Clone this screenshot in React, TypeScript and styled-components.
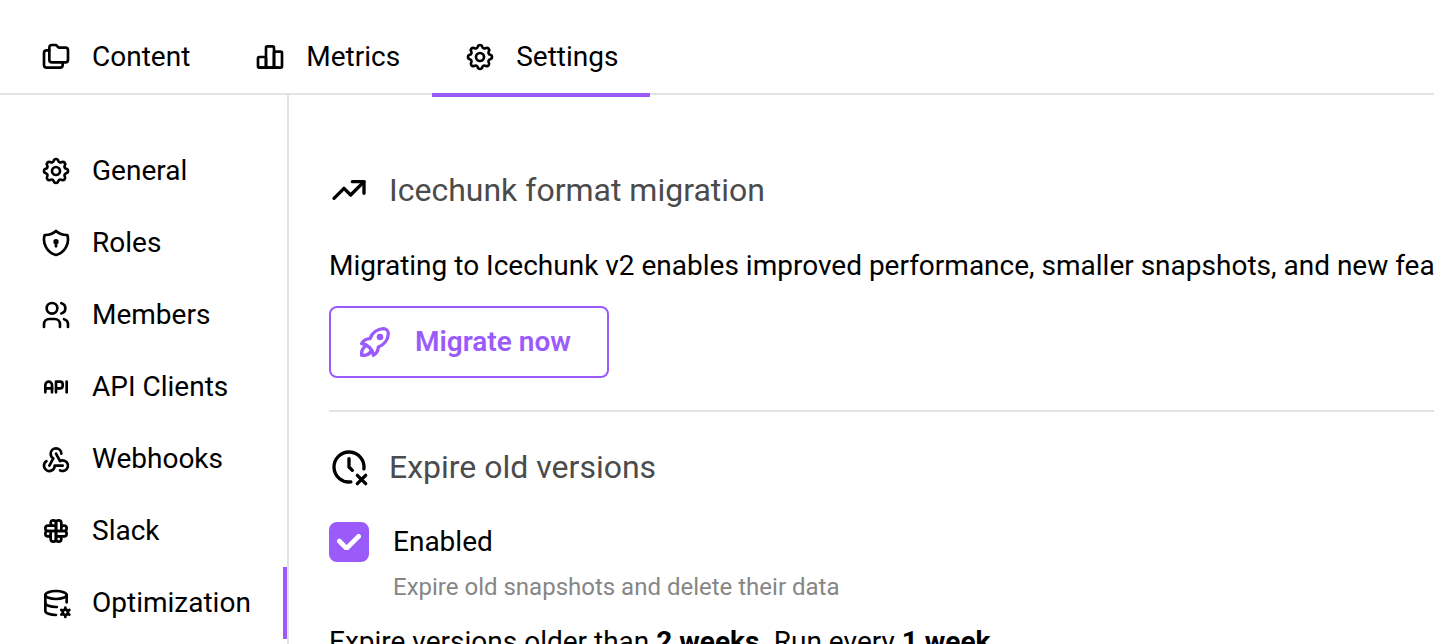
import React from "react";
import styled, { createGlobalStyle } from "styled-components";

const purple = "#9b5bfb";
const line = "#e3e3e3";

const GlobalStyle = createGlobalStyle`
  *, *::before, *::after { box-sizing: border-box; }
  body {
    margin: 0;
    background: #fff;
    color: #000;
    font-family: Roboto, "Liberation Sans", sans-serif;
    font-size: 28px;
    line-height: 42px;
  }
`;

const Page = styled.div`
  display: flex;
  flex-direction: column;
  height: 100vh;
  overflow: hidden;
`;

const TabBar = styled.nav`
  display: flex;
  flex: none;
  padding: 21px 8px 0;
  border-bottom: 2px solid ${line};
`;

const Tab = styled.a<{ $active?: boolean }>`
  display: flex;
  align-items: center;
  gap: 20px;
  height: 76px;
  margin-bottom: -4px;
  padding: 0 32px;
  border-bottom: 4px solid ${(p) => (p.$active ? purple : "transparent")};
  color: inherit;
  text-decoration: none;
`;

const Body = styled.div`
  display: flex;
  flex: 1;
  min-height: 0;
`;

const Sidebar = styled.nav`
  flex: none;
  width: 289px;
  padding-top: 40px;
  border-right: 2px solid ${line};
`;

const SideLink = styled.a<{ $active?: boolean }>`
  display: flex;
  align-items: center;
  gap: 20px;
  height: 72px;
  padding-left: 40px;
  border-right: 4px solid ${(p) => (p.$active ? purple : "transparent")};
  color: inherit;
  text-decoration: none;
`;

const Main = styled.main`
  flex: 1;
  min-width: 0;
  padding: 75px 0 0 40px;
  overflow: hidden;
`;

const Section = styled.section`
  & + & {
    margin-top: 32px;
    padding-top: 35px;
    border-top: 2px solid ${line};
  }
`;

const Heading = styled.h2`
  display: flex;
  align-items: center;
  gap: 20px;
  margin: 0 0 35px;
  color: #4b4b4b;
  font-size: 32px;
  font-weight: 400;
  line-height: 40px;

  svg { color: #000; }
`;

const Text = styled.p`
  margin: 0;
  white-space: nowrap;
`;

const Button = styled.button`
  display: flex;
  align-items: center;
  gap: 20px;
  height: 72px;
  margin-top: 19px;
  padding: 0 36px 0 24px;
  border: 2px solid ${purple};
  border-radius: 8px;
  background: #fff;
  color: ${purple};
  font: inherit;
  font-weight: 600;
`;

const Option = styled.div`
  display: grid;
  grid-template-columns: 40px 1fr;
  column-gap: 24px;
  margin-bottom: 16px;
`;

const CheckBox = styled.input`
  grid-area: 1 / 1;
  appearance: none;
  width: 40px;
  height: 40px;
  margin: 0;
  border: 2px solid #ced4da;
  border-radius: 8px;

  &:checked {
    border-color: ${purple};
    background: ${purple};
  }
  &:not(:checked) + svg { visibility: hidden; }
`;

const Tick = styled.svg`
  grid-area: 1 / 1;
  place-self: center;
  width: 24px;
  color: #fff;
  pointer-events: none;
`;

const Label = styled.label`
  grid-area: 1 / 2;
  line-height: 40px;
`;

const Hint = styled.p`
  grid-area: 2 / 2;
  margin: 7px 0 0;
  color: #868686;
  font-size: 24px;
  line-height: 36px;
`;

const Svg = styled.svg`
  flex: none;
`;

const icons = {
  folders: [
    "M9 3h3l2 2h5a2 2 0 0 1 2 2v7a2 2 0 0 1 -2 2h-10a2 2 0 0 1 -2 -2v-9a2 2 0 0 1 2 -2",
    "M17 16v2a2 2 0 0 1 -2 2h-10a2 2 0 0 1 -2 -2v-9a2 2 0 0 1 2 -2h2",
  ],
  chart: [
    "M3 13a1 1 0 0 1 1 -1h4a1 1 0 0 1 1 1v6a1 1 0 0 1 -1 1h-4a1 1 0 0 1 -1 -1z",
    "M15 9a1 1 0 0 1 1 -1h4a1 1 0 0 1 1 1v10a1 1 0 0 1 -1 1h-4a1 1 0 0 1 -1 -1z",
    "M9 5a1 1 0 0 1 1 -1h4a1 1 0 0 1 1 1v14a1 1 0 0 1 -1 1h-4a1 1 0 0 1 -1 -1z",
    "M4 20h14",
  ],
  settings: [
    "M10.325 4.317c.426 -1.756 2.924 -1.756 3.35 0a1.724 1.724 0 0 0 2.573 1.066c1.543 -.94 3.31 .826 2.37 2.37a1.724 1.724 0 0 0 1.065 2.572c1.756 .426 1.756 2.924 0 3.35a1.724 1.724 0 0 0 -1.066 2.573c.94 1.543 -.826 3.31 -2.37 2.37a1.724 1.724 0 0 0 -2.572 1.065c-.426 1.756 -2.924 1.756 -3.35 0a1.724 1.724 0 0 0 -2.573 -1.066c-1.543 .94 -3.31 -.826 -2.37 -2.37a1.724 1.724 0 0 0 -1.065 -2.572c-1.756 -.426 -1.756 -2.924 0 -3.35a1.724 1.724 0 0 0 1.066 -2.573c-.94 -1.543 .826 -3.31 2.37 -2.37c1 .608 2.296 .07 2.572 -1.065z",
    "M9 12a3 3 0 1 0 6 0a3 3 0 0 0 -6 0",
  ],
  shield: [
    "M12 3a12 12 0 0 0 8.5 3a12 12 0 0 1 -8.5 15a12 12 0 0 1 -8.5 -15a12 12 0 0 0 8.5 -3",
    "M11 11a1 1 0 1 0 2 0a1 1 0 1 0 -2 0",
    "M12 12l0 2.5",
  ],
  users: [
    "M5 7a4 4 0 1 0 8 0a4 4 0 1 0 -8 0",
    "M3 21v-2a4 4 0 0 1 4 -4h4a4 4 0 0 1 4 4v2",
    "M16 3.13a4 4 0 0 1 0 7.75",
    "M21 21v-2a4 4 0 0 0 -3 -3.85",
  ],
  api: [
    "M4 13h5",
    "M12 16v-8h3a2 2 0 0 1 2 2v1a2 2 0 0 1 -2 2h-3",
    "M20 8v8",
    "M9 16v-5.5a2.5 2.5 0 0 0 -5 0v5.5",
  ],
  webhook: [
    "M4.876 13.61a4 4 0 1 0 6.124 3.39h6",
    "M15.066 20.502a4 4 0 1 0 1.934 -7.502c-.706 0 -1.424 .179 -2 .5l-3 -5.5",
    "M16 8a4 4 0 1 0 -8 0c0 1.506 .77 2.818 2 3.5l-3 5.5",
  ],
  slack: [
    "M12 12v-6a2 2 0 0 1 4 0v6m0 -2a2 2 0 1 1 2 2h-6",
    "M12 12h6a2 2 0 0 1 0 4h-6m2 0a2 2 0 1 1 -2 2v-6",
    "M12 12v6a2 2 0 0 1 -4 0v-6m0 2a2 2 0 1 1 -2 -2h6",
    "M12 12h-6a2 2 0 0 1 0 -4h6m-2 0a2 2 0 1 1 2 -2v6",
  ],
  databaseCog: [
    "M4 6c0 1.657 3.582 3 8 3s8 -1.343 8 -3s-3.582 -3 -8 -3s-8 1.343 -8 3",
    "M4 6v6c0 1.657 3.582 3 8 3c.21 0 .42 -.003 .626 -.01",
    "M20 11.5v-5.5",
    "M4 12v6c0 1.657 3.582 3 8 3",
    "M17.001 19a2 2 0 1 0 4 0a2 2 0 1 0 -4 0",
    "M19.001 15.5v1.5",
    "M19.001 21v1.5",
    "M22.032 17.25l-1.299 .75",
    "M17.27 20l-1.3 .75",
    "M15.97 17.25l1.3 .75",
    "M20.733 20l1.3 .75",
  ],
  trending: ["M3 17l6 -6l4 4l8 -8", "M14 7l7 0l0 7"],
  rocket: [
    "M4 13a8 8 0 0 1 7 7a6 6 0 0 0 3 -5a9 9 0 0 0 6 -8a3 3 0 0 0 -3 -3a9 9 0 0 0 -8 6a6 6 0 0 0 -5 3",
    "M7 14a6 6 0 0 0 -3 6a6 6 0 0 0 6 -3",
    "M14 9a1 1 0 1 0 2 0a1 1 0 1 0 -2 0",
  ],
  clockX: [
    "M20.926 13.15a9 9 0 1 0 -7.835 7.784",
    "M12 7v5l2 2",
    "M22 22l-5 -5",
    "M17 22l5 -5",
  ],
};

type IconName = keyof typeof icons;

function Icon({ name, size = 32 }: { name: IconName; size?: number }) {
  return (
    <Svg
      width={size}
      height={size}
      viewBox="0 0 24 24"
      fill="none"
      stroke="currentColor"
      strokeWidth="2"
      strokeLinecap="round"
      strokeLinejoin="round"
      aria-hidden="true"
    >
      {icons[name].map((d) => (
        <path key={d} d={d} />
      ))}
    </Svg>
  );
}

const tabs: { label: string; icon: IconName }[] = [
  { label: "Content", icon: "folders" },
  { label: "Metrics", icon: "chart" },
  { label: "Settings", icon: "settings" },
];

const links: { label: string; icon: IconName }[] = [
  { label: "General", icon: "settings" },
  { label: "Roles", icon: "shield" },
  { label: "Members", icon: "users" },
  { label: "API Clients", icon: "api" },
  { label: "Webhooks", icon: "webhook" },
  { label: "Slack", icon: "slack" },
  { label: "Optimization", icon: "databaseCog" },
];

export default function App() {
  return (
    <>
      <GlobalStyle />
      <Page>
        <TabBar aria-label="Repository">
          {tabs.map((t) => (
            <Tab key={t.label} href="#" $active={t.label === "Settings"}>
              <Icon name={t.icon} />
              {t.label}
            </Tab>
          ))}
        </TabBar>
        <Body>
          <Sidebar aria-label="Settings">
            {links.map((l) => (
              <SideLink key={l.label} href="#" $active={l.label === "Optimization"}>
                <Icon name={l.icon} />
                {l.label}
              </SideLink>
            ))}
          </Sidebar>
          <Main>
            <Section>
              <Heading>
                <Icon name="trending" size={40} />
                Icechunk format migration
              </Heading>
              <Text>
                Migrating to Icechunk v2 enables improved performance, smaller snapshots, and new features.
              </Text>
              <Button type="button">
                <Icon name="rocket" size={40} />
                Migrate now
              </Button>
            </Section>
            <Section>
              <Heading>
                <Icon name="clockX" size={40} />
                Expire old versions
              </Heading>
              <Option>
                <CheckBox type="checkbox" id="expire" aria-describedby="expire-hint" defaultChecked />
                <Tick viewBox="0 0 10 7" fill="currentColor" aria-hidden="true">
                  <path d="M4 4.586L1.707 2.293A1 1 0 1 0 .293 3.707l3 3a.997.997 0 0 0 1.414 0l5-5A1 1 0 1 0 8.293.293L4 4.586z" />
                </Tick>
                <Label htmlFor="expire">Enabled</Label>
                <Hint id="expire-hint">Expire old snapshots and delete their data</Hint>
              </Option>
              <Text>
                Expire versions older than <b>2 weeks</b>. Run every <b>1 week</b>.
              </Text>
            </Section>
          </Main>
        </Body>
      </Page>
    </>
  );
}
